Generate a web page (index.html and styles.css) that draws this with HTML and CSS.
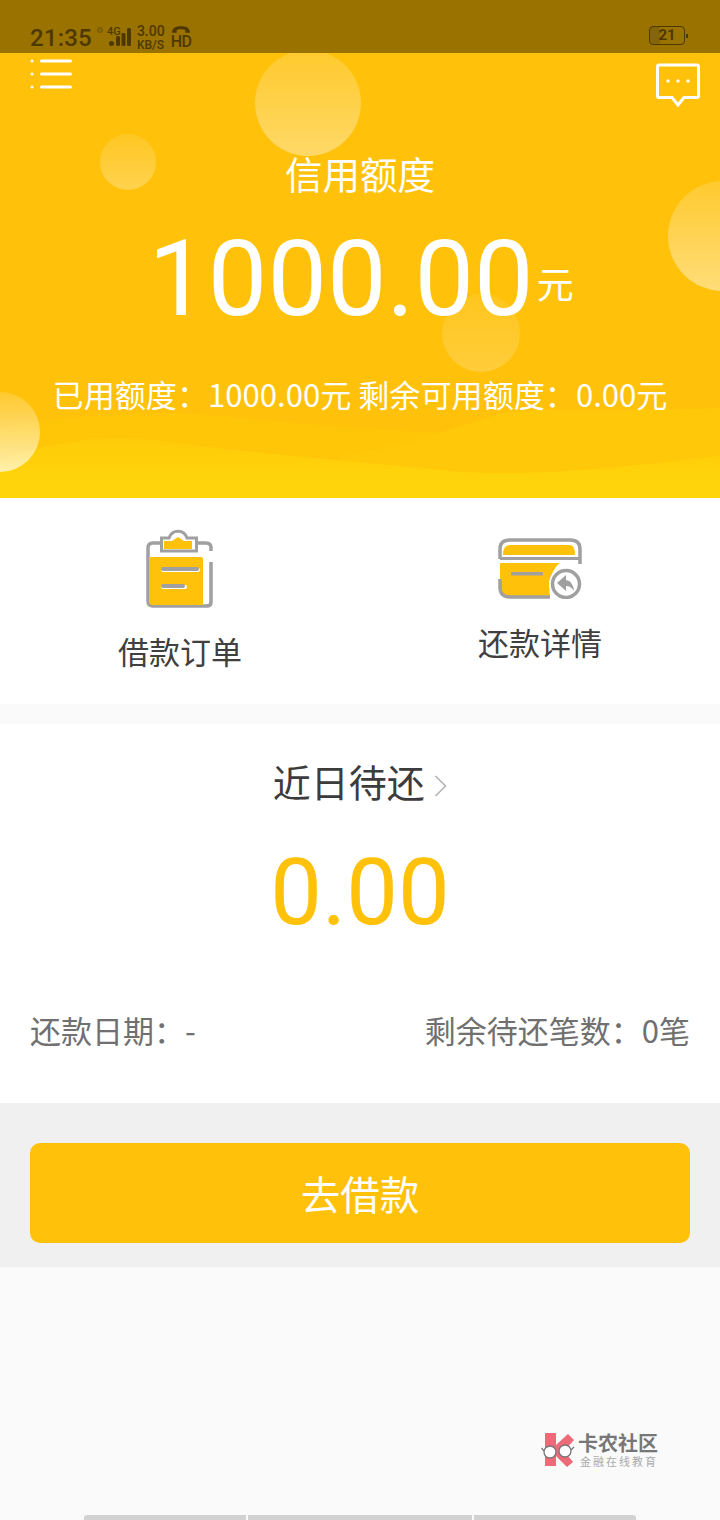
FILE: index.html
```html
<!DOCTYPE html>
<html lang="zh">
<head>
<meta charset="UTF-8">
<title>信用额度</title>
<link rel="stylesheet" href="styles.css">
</head>
<body>
<div class="page">

	<div class="statusbar">
		<div class="status-left">
			<span class="clock">21:35</span>
			<span class="dot-alarm"></span>
			<span class="net">4G</span>
			<svg class="signal" width="24" height="20" viewBox="0 0 24 20">
				<rect x="0" y="13" width="5" height="5" rx="2.500" fill="#4d3900"/>
				<rect x="7" y="8" width="4" height="10" rx="1.500" fill="#4d3900"/>
				<rect x="12.500" y="5" width="4" height="13" rx="1.500" fill="#4d3900"/>
				<rect x="18" y="0" width="4" height="18" rx="1.500" fill="#4d3900"/>
			</svg>
			<span class="speed"><b>3.00</b><b>KB/S</b></span>
			<span class="hd">
				<svg width="20" height="9" viewBox="0 0 21 9"><path d="M1 8 C1 2 6 1 10.500 1 C15 1 20 2 20 8 L15 8 L15 5 C13 4 8 4 6 5 L6 8 Z" fill="#4d3900"/></svg>
				<b>HD</b>
			</span>
		</div>
		<div class="battery"><span class="battery-body">21</span><span class="battery-tip"></span></div>
	</div>

	<div class="hero">
		<svg class="waves" width="720" height="100" viewBox="0 0 720 100" preserveAspectRatio="none">
			<defs>
				<linearGradient id="waveLow" x1="0" y1="0" x2="0" y2="1">
					<stop offset="0" stop-color="#ffcb09"/>
					<stop offset="0.6" stop-color="#ffd30b"/>
					<stop offset="1" stop-color="#ffd50c"/>
				</linearGradient>
			</defs>
			<path d="M0 30 C60 18 130 14 190 16 C260 20 340 32 440 34 C500 46 560 66 620 72 C660 76 700 70 720 68 L720 100 L0 100 Z" fill="#ffc608"/>
			<path d="M340 58 C400 50 440 34 500 16 C550 8 610 14 720 10 L720 100 L340 100 Z" fill="#ffc909"/>
			<path d="M0 62 C60 40 110 36 170 44 C260 56 340 62 440 72 C520 80 600 72 720 58 L720 100 L0 100 Z" fill="url(#waveLow)"/>
		</svg>
		<div class="bubble b1"></div>
		<div class="bubble b2"></div>
		<div class="bubble b3"></div>
		<div class="bubble b4"></div>
		<div class="bubble b5"></div>

		<div class="hero-top">
			<svg class="menu-icon" width="44" height="32" viewBox="0 0 44 32">
				<circle cx="2" cy="2" r="1.500" fill="#fff"/><rect x="10" y="0.500" width="32" height="3" rx="1.500" fill="#fff"/>
				<circle cx="2" cy="15" r="1.500" fill="#fff"/><rect x="10" y="13.500" width="32" height="3" rx="1.500" fill="#fff"/>
				<circle cx="2" cy="28" r="1.500" fill="#fff"/><rect x="10" y="26.500" width="32" height="3" rx="1.500" fill="#fff"/>
			</svg>
			<svg class="msg-icon" width="44" height="45" viewBox="0 0 44 45">
				<path d="M3 2 H41 A1.500 1.500 0 0 1 42.500 3.500 V33 A1.500 1.500 0 0 1 41 34.500 H28 L22 42 L16 34.500 H3 A1.500 1.500 0 0 1 1.500 33 V3.500 A1.500 1.500 0 0 1 3 2 Z" fill="none" stroke="#fff" stroke-width="3"/>
				<circle cx="12" cy="18" r="1.700" fill="#fff"/><circle cx="22" cy="18" r="1.700" fill="#fff"/><circle cx="32" cy="18" r="1.700" fill="#fff"/>
			</svg>
		</div>
		<div class="hero-title">信用额度</div>
		<div class="hero-amount">1000.00<span class="unit">元</span></div>
		<div class="hero-sub">已用额度：1000.00元 剩余可用额度：0.00元</div>
	</div>

	<div class="shortcuts">
		<div class="shortcut">
			<svg class="icon-order" width="68" height="80" viewBox="0 0 68 80">
				<path d="M14 15 H7 Q2 15 2 20 V73 Q2 78 7 78 H61 Q65 78 65 74 V34" fill="none" stroke="#a0a0a0" stroke-width="3.500"/>
				<path d="M52 15 H60 Q65 15 65 20 V23" fill="none" stroke="#a0a0a0" stroke-width="3.500"/>
				<path d="M3 29 H55 Q57 29 57 31 V77 H7 Q3 77 3 73 Z" fill="#ffc10a"/>
				<path d="M15.500 23 V10 H23 C26 1 38 1 41 10 H50.500 V23 Z" fill="#fff" stroke="#a0a0a0" stroke-width="3"/>
				<path d="M18 21 V13 H26 L32 9 L38 13 H46 V21 Z" fill="#ffc10a"/>
				<rect x="15" y="40" width="39" height="4" rx="2" fill="#fff"/>
				<rect x="15" y="39" width="38" height="4" rx="2" fill="#a0a0a0"/>
				<rect x="15" y="57" width="26" height="4" rx="2" fill="#fff"/>
				<rect x="15" y="56" width="24" height="4" rx="2" fill="#a0a0a0"/>
			</svg>
			<div class="shortcut-label">借款订单</div>
		</div>
		<div class="shortcut shortcut-pay">
			<svg class="icon-pay" width="84" height="62" viewBox="0 0 84 62">
				<path d="M12 8 H72 Q77 8 77 18 H5 Q5 8 12 8 Z" fill="#ffc10a"/>
				<path d="M2 26 H62 C54 32 50 44 52 60 H12 Q2 60 2 50 Z" fill="#ffc10a"/>
				<path d="M2 22 V12 Q2 3 12 3 H72 Q82 3 82 12 V27" fill="none" stroke="#a0a0a0" stroke-width="3.500"/>
				<path d="M2 21.500 H82" stroke="#a0a0a0" stroke-width="3"/>
				<path d="M2 42 V50 Q2 60 12 60 H52" fill="none" stroke="#a0a0a0" stroke-width="3.500"/>
				<rect x="13" y="35" width="32" height="3.500" rx="1" fill="#a0a0a0"/>
				<circle cx="68" cy="47" r="17" fill="#fff"/>
				<circle cx="68" cy="47" r="13.500" fill="#fff" stroke="#a0a0a0" stroke-width="3.500"/>
				<path d="M59 46 L68 38 V43 Q75 44 76 54 Q73 49 68 49 V54 Z" fill="#a0a0a0"/>
			</svg>
			<div class="shortcut-label">还款详情</div>
		</div>
	</div>

	<div class="recent">
		<div class="recent-title">近日待还
			<svg class="chevron" width="13" height="22" viewBox="0 0 13 22"><path d="M1.500 1 L11.500 11 L1.500 21" fill="none" stroke="#b4b4b4" stroke-width="1.600"/></svg>
		</div>
		<div class="recent-amount">0.00</div>
		<div class="recent-row">
			<span>还款日期：-</span>
			<span>剩余待还笔数：0笔</span>
		</div>
	</div>

	<div class="action">
		<div class="btn-borrow">去借款</div>
	</div>

	<div class="bottom">
		<div class="watermark">
			<svg class="wm-logo" width="34" height="37" viewBox="0 0 34 37">
				<path d="M4 2 H15 V14 L27 3 L33 9 L23 20 L32 31 L26 36 L15 25 V35 H4 Z" fill="#ee6a78"/>
				<circle cx="9" cy="21" r="6" fill="#fff" stroke="#777" stroke-width="1.300"/>
				<circle cx="24" cy="20" r="6" fill="#fff" stroke="#777" stroke-width="1.300"/>
				<path d="M3 20 L0.500 17 M30 19 L33 16" stroke="#777" stroke-width="1.300"/>
			</svg>
			<div class="wm-text">
				<div class="wm-name">卡农社区</div>
				<div class="wm-slogan">金融在线教育</div>
			</div>
		</div>
		<div class="navbar-hint">
			<span class="seg seg-a"></span>
			<span class="seg seg-b"></span>
			<span class="seg seg-c"></span>
		</div>
	</div>

</div>
</body>
</html>
```

FILE: styles.css
```css
html, body {
	margin: 0;
	padding: 0;
	background-color: #fafafa;
}

body {
	font-family: "Noto Sans CJK SC", Roboto, sans-serif;
	color: #333333;
}

.page {
	width: 720px;
	height: 1520px;
	overflow: hidden;
	display: flex;
	flex-direction: column;
}

/* status bar */
.statusbar {
	height: 53px;
	box-sizing: border-box;
	padding: 21px 32px 0 30px;
	background-color: #9a7200;
	display: flex;
	justify-content: space-between;
	align-items: flex-start;
	color: #4d3900;
	font-family: Roboto, sans-serif;
}

.status-left {
	display: flex;
	align-items: flex-start;
}

.clock {
	font-size: 24px;
	line-height: 34px;
	font-weight: 500;
	letter-spacing: 0.2px;
}

.dot-alarm {
	width: 4px;
	height: 4px;
	margin: 6px 0 0 5px;
	border-radius: 50%;
	background-color: #86660a;
	border: 1px solid #7a5c00;
}

.net {
	font-size: 11px;
	line-height: 12px;
	font-weight: 500;
	margin: 5px 0 0 4px;
	width: 13px;
}

.signal {
	margin: 7px 4px 0 -11px;
}

.speed {
	display: flex;
	flex-direction: column;
	margin: 3px 0 0 0;
	font-size: 12px;
	line-height: 14px;
}

.speed b {
	font-weight: 500;
}

.speed b:first-child {
	font-size: 14px;
}

.hd {
	display: flex;
	flex-direction: column;
	margin: 4px 0 0 6px;
	font-size: 16px;
	line-height: 15px;
}

.hd svg {
	display: block;
}

.hd b {
	font-weight: 500;
	letter-spacing: -0.5px;
}

.battery {
	display: flex;
	align-items: center;
	margin-top: 5px;
}

.battery-body {
	width: 36px;
	height: 19px;
	box-sizing: border-box;
	border: 1px solid #4d3900;
	border-radius: 4px;
	background: linear-gradient(to right, #86650a 0, #86650a 30%, transparent 30%);
	text-align: center;
	font-size: 15px;
	line-height: 17px;
	font-weight: 700;
}

.battery-tip {
	width: 2px;
	height: 4px;
	margin-left: 1px;
	background-color: #4d3900;
}

/* yellow header */
.hero {
	height: 445px;
	position: relative;
	overflow: hidden;
	background-color: #ffc10a;
	color: #ffffff;
	text-align: center;
}

.bubble {
	position: absolute;
	border-radius: 50%;
	background: linear-gradient(to bottom, rgba(255, 255, 255, 0.14), rgba(255, 255, 255, 0.38));
}

.b1 { left: 255px; top: -3px; width: 106px; height: 106px; }
.b2 { left: 100px; top: 81px; width: 56px; height: 56px; background: linear-gradient(to bottom, rgba(255, 255, 255, 0.1), rgba(255, 255, 255, 0.28)); }
.b3 { left: 668px; top: 128px; width: 110px; height: 110px; background: linear-gradient(to bottom, rgba(255, 255, 255, 0.15), rgba(255, 255, 255, 0.45)); }
.b4 { left: 442px; top: 241px; width: 78px; height: 78px; background: linear-gradient(to bottom, rgba(255, 255, 255, 0.08), rgba(255, 255, 255, 0.2)); }
.b5 { left: -40px; top: 339px; width: 80px; height: 80px; background: linear-gradient(to bottom, rgba(255, 255, 255, 0.15), rgba(255, 255, 255, 0.65)); }

.waves {
	position: absolute;
	left: 0;
	bottom: 0;
	display: block;
}

.hero-top {
	position: relative;
	height: 55px;
	padding: 6px 20px 0 30px;
	display: flex;
	justify-content: space-between;
	align-items: flex-start;
}

.msg-icon {
	margin-top: 4px;
}

.hero-title,
.hero-amount,
.hero-sub {
	position: relative;
}

.hero-title {
	margin-top: 31px;
	font-size: 37.5px;
	line-height: 56px;
}

.hero-amount {
	margin-top: 22px;
	padding-left: 2px;
	font-family: Roboto, sans-serif;
	font-size: 106px;
	line-height: 112px;
}

.unit {
	font-family: "Noto Sans CJK SC", sans-serif;
	font-size: 37px;
	line-height: 40px;
	margin-left: 3px;
	vertical-align: 16px;
}

.hero-sub {
	margin-top: 37px;
	font-size: 31.1px;
	line-height: 44px;
	white-space: nowrap;
}

/* shortcuts */
.shortcuts {
	height: 206px;
	background-color: #ffffff;
	display: flex;
}

.shortcut {
	flex: 1;
	display: flex;
	flex-direction: column;
	align-items: center;
	padding-top: 30px;
}

.shortcut svg {
	display: block;
}

.shortcut-pay {
	padding-top: 39px;
}

.shortcut-label {
	margin-top: 20px;
	font-size: 31px;
	line-height: 46px;
	color: #404040;
}

/* recent */
.recent {
	margin-top: 20px;
	height: 379px;
	box-sizing: border-box;
	padding: 32px 30px 0;
	background-color: #ffffff;
	text-align: center;
}

.recent-title {
	font-size: 38px;
	line-height: 50px;
	color: #3c3c3c;
}

.chevron {
	margin-left: 1px;
}

.recent-amount {
	margin-top: 37px;
	font-family: Roboto, sans-serif;
	font-size: 92px;
	line-height: 100px;
	color: #ffc10a;
}

.recent-row {
	margin-top: 65px;
	display: flex;
	justify-content: space-between;
	font-size: 31px;
	line-height: 44px;
	color: #707070;
}

/* button */
.action {
	height: 164px;
	box-sizing: border-box;
	padding: 40px 30px 24px;
	background-color: #f0f0f0;
}

.btn-borrow {
	height: 100px;
	border-radius: 10px;
	background-color: #ffc10a;
	color: #ffffff;
	text-align: center;
	font-size: 39.5px;
	line-height: 100px;
}

/* bottom */
.bottom {
	flex: 1;
	display: flex;
	flex-direction: column;
	justify-content: flex-end;
	background-color: #fafafa;
}

.watermark {
	align-self: flex-end;
	margin: 0 62px 47px 0;
	display: flex;
	gap: 3px;
	align-items: center;
}

.wm-name {
	font-size: 20px;
	line-height: 22px;
	font-weight: 700;
	color: #777777;
}

.wm-slogan {
	font-size: 11px;
	line-height: 14px;
	letter-spacing: 2px;
	margin-left: 2px;
	color: #aaaaaa;
}

.navbar-hint {
	height: 5px;
	padding: 0 84px;
	display: flex;
	gap: 2px;
}

.seg {
	height: 5px;
	background-color: #d2d2d2;
}

.seg-a { width: 162px; border-radius: 3px 0 0 0; }
.seg-b { width: 224px; }
.seg-c { width: 162px; border-radius: 0 3px 0 0; }
```
